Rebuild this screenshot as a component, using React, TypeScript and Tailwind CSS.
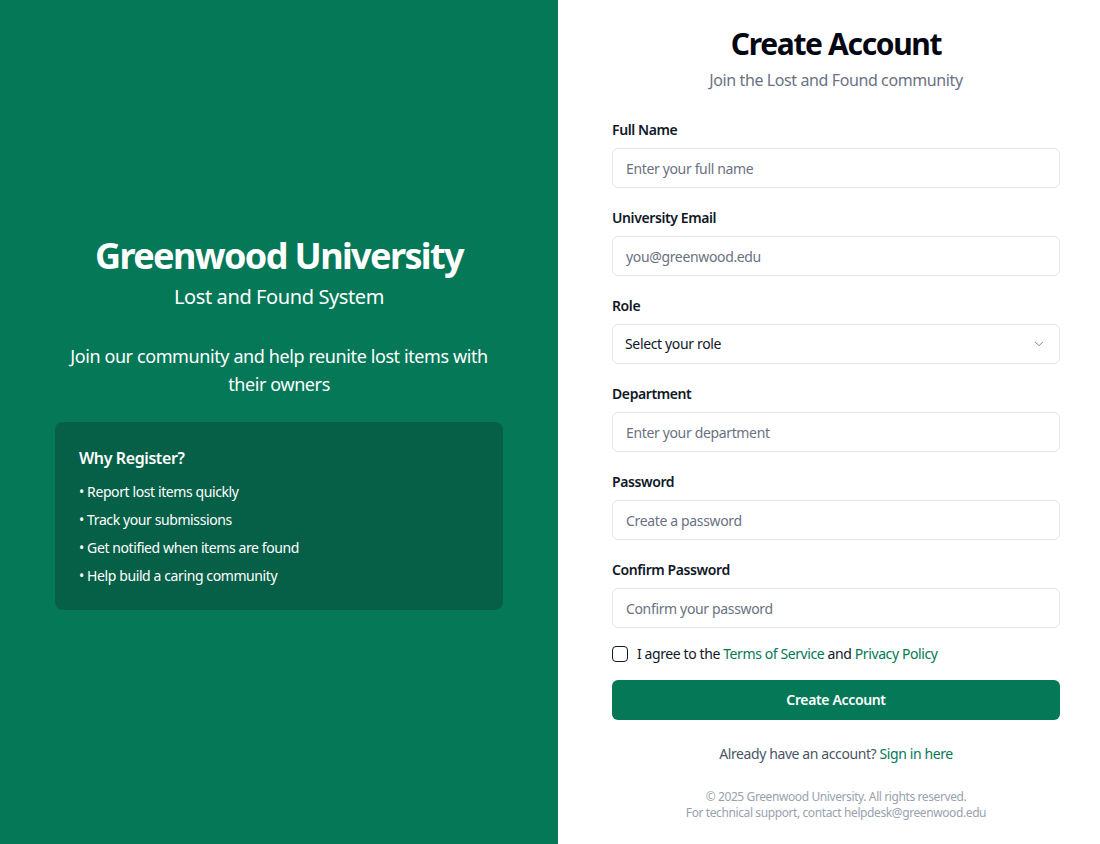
import React from "react";
import { ChevronDown } from "lucide-react";

const font = { fontFamily: '"Noto Sans", "Open Sans", sans-serif' };

function Label({ children }: { children: React.ReactNode }) {
  return <label className="block text-sm font-semibold leading-5 text-gray-900 mb-2 pt-[1px]">{children}</label>;
}

function Field({ label, placeholder, type = "text" }: { label: string; placeholder: string; type?: string }) {
  return (
    <div>
      <Label>{label}</Label>
      <input
        type={type}
        placeholder={placeholder}
        className="w-full h-10 rounded-md border border-gray-200 bg-white px-[13px] text-sm tracking-tight text-gray-900 placeholder:text-gray-500 outline-none"
      />
    </div>
  );
}

export default function App() {
  return (
    <div className="flex w-full h-[844px] overflow-hidden tracking-tight" style={font}>
      <div className="w-[558px] shrink-0 bg-[#047857] flex flex-col items-center justify-center text-white pt-[2px]">
        <h1 className="text-4xl font-bold leading-10 tracking-[-0.045em]">Greenwood University</h1>
        <p className="text-xl leading-7 mt-[7px]">Lost and Found System</p>
        <p className="text-lg leading-7 mt-[31px] text-center w-[430px]">
          Join our community and help reunite lost items with their owners
        </p>
        <div className="mt-6 w-[448px] rounded-lg bg-[#066048] p-6">
          <h3 className="text-base font-semibold leading-6 mb-3">Why Register?</h3>
          <ul className="space-y-2 text-sm leading-5">
            <li>• Report lost items quickly</li>
            <li>• Track your submissions</li>
            <li>• Get notified when items are found</li>
            <li>• Help build a caring community</li>
          </ul>
        </div>
      </div>

      <div className="flex-1 bg-white pl-[54px] pr-[40px] pt-[26px]">
        <div className="w-[448px]">
          <h2 className="text-3xl font-bold leading-9 text-gray-950 text-center tracking-[-0.045em]">Create Account</h2>
          <p className="text-base leading-6 text-gray-500 text-center mt-[6px]">Join the Lost and Found community</p>

          <div className="mt-[27px] flex flex-col gap-[19px]">
            <Field label="Full Name" placeholder="Enter your full name" />
            <Field label="University Email" placeholder="you@greenwood.edu" type="email" />
            <div>
              <Label>Role</Label>
              <div className="relative">
                <select className="w-full h-10 appearance-none rounded-md border border-gray-200 bg-white px-[12px] text-sm tracking-tight text-gray-900 outline-none">
                  <option>Select your role</option>
                </select>
                <ChevronDown className="absolute right-[14px] top-[13px] w-[14px] h-[14px] text-gray-500 pointer-events-none" strokeWidth={1.5} />
              </div>
            </div>
            <Field label="Department" placeholder="Enter your department" />
            <Field label="Password" placeholder="Create a password" type="password" />
            <Field label="Confirm Password" placeholder="Confirm your password" type="password" />
          </div>

          <div className="mt-4 flex items-center h-5">
            <span className="w-4 h-4 rounded-[4px] border border-gray-900 bg-white shrink-0" />
            <span className="ml-[9px] text-sm text-gray-900">
              I agree to the <span className="text-[#047857]">Terms of Service</span> and{" "}
              <span className="text-[#047857]">Privacy Policy</span>
            </span>
          </div>

          <button className="mt-4 w-full h-10 rounded-md bg-[#047857] text-white text-sm font-semibold tracking-tight">
            Create Account
          </button>

          <p className="mt-6 text-center text-sm leading-5 text-gray-600">
            Already have an account? <span className="text-[#047857]">Sign in here</span>
          </p>

          <div className="mt-[25px] text-center text-xs leading-4 text-gray-400">
            <p>© 2025 Greenwood University. All rights reserved.</p>
            <p>For technical support, contact helpdesk@greenwood.edu</p>
          </div>
        </div>
      </div>
    </div>
  );
}
